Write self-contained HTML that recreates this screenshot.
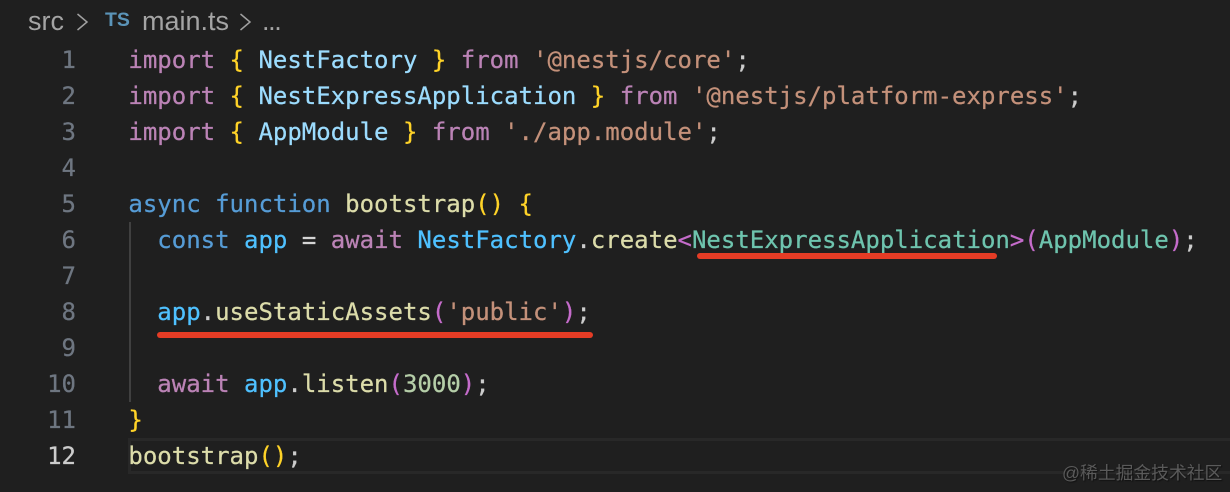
<!DOCTYPE html>
<html><head><meta charset="utf-8">
<style>
html,body{margin:0;padding:0;background:#1f1f1f;}
#r{position:relative;width:1230px;height:492px;overflow:hidden;background:#1f1f1f;}
.l,.n{position:absolute;font-family:"DejaVu Sans Mono","Liberation Mono",monospace;font-size:24px;line-height:36px;white-space:pre;height:36px;-webkit-text-stroke:0.25px currentColor;filter:blur(0.3px);}
.l{left:128.4px;color:#cccccc;}
.n{left:0;width:76px;text-align:right;color:#6e7681;}
.k{color:#bb83b6}.b{color:#ffd328}.v{color:#9cdcfe}.s{color:#c4917a}.d{color:#569cd6}.f{color:#dcdcaa}
.c{color:#4fc1ff}.t{color:#6ec4ae}.p{color:#c56ccb}.w{color:#cccccc}.g{color:#b5cea8}.a{color:#d4d4d4}
.crumb{position:absolute;font-family:"Liberation Sans",sans-serif;font-size:27px;line-height:30px;color:#a4a4a4;white-space:pre;top:6px;filter:blur(0.3px);}
</style></head><body><div id="r">
<div class="crumb" style="left:28px">src</div>
<div class="crumb" style="left:105px;top:5px;font-size:19.5px;font-weight:bold;color:#5b94b8">TS</div>
<div class="crumb" style="left:142px">main.ts</div>
<div class="crumb" style="left:262px;letter-spacing:-1.4px">...</div>
<svg style="position:absolute;left:0;top:0" width="300" height="40" viewBox="0 0 300 40"><path d="M77.5 14 L87 22 L77.5 30 M240.5 14 L250 22 L240.5 30" fill="none" stroke="#a0a0a0" stroke-width="1.5"/></svg>

<div style="position:absolute;left:129px;top:222px;width:2px;height:180px;background:#404040"></div>
<div style="position:absolute;left:128px;top:438px;width:1102px;height:36px;box-sizing:border-box;border-top:3px solid #282828;border-bottom:3px solid #282828;border-left:3px solid #282828"></div>

<div class="n" style="top:42px">1</div>
<div class="n" style="top:78px">2</div>
<div class="n" style="top:114px">3</div>
<div class="n" style="top:150px">4</div>
<div class="n" style="top:186px">5</div>
<div class="n" style="top:222px">6</div>
<div class="n" style="top:258px">7</div>
<div class="n" style="top:294px">8</div>
<div class="n" style="top:330px">9</div>
<div class="n" style="top:366px">10</div>
<div class="n" style="top:402px">11</div>
<div class="n" style="top:438px;color:#cccccc">12</div>

<div class="l" style="top:42px"><span class="k">import</span> <span class="b">{</span> <span class="v">NestFactory</span> <span class="b">}</span> <span class="k">from</span> <span class="s">'@nestjs/core'</span>;</div>
<div class="l" style="top:78px"><span class="k">import</span> <span class="b">{</span> <span class="v">NestExpressApplication</span> <span class="b">}</span> <span class="k">from</span> <span class="s">'@nestjs/platform-express'</span>;</div>
<div class="l" style="top:114px"><span class="k">import</span> <span class="b">{</span> <span class="v">AppModule</span> <span class="b">}</span> <span class="k">from</span> <span class="s">'./app.module'</span>;</div>
<div class="l" style="top:186px"><span class="d">async</span> <span class="d">function</span> <span class="f">bootstrap</span><span class="b">()</span> <span class="b">{</span></div>
<div class="l" style="top:222px">  <span class="d">const</span> <span class="c">app</span> <span class="a">=</span> <span class="k">await</span> <span class="c">NestFactory</span>.<span class="f">create</span><span class="p">&lt;</span><span class="t">NestExpressApplication</span><span class="p">&gt;(</span><span class="t">AppModule</span><span class="p">)</span>;</div>
<div class="l" style="top:294px">  <span class="c">app</span>.<span class="f">useStaticAssets</span><span class="p">(</span><span class="s">'public'</span><span class="p">)</span>;</div>
<div class="l" style="top:366px">  <span class="k">await</span> <span class="c">app</span>.<span class="f">listen</span><span class="p">(</span><span class="g">3000</span><span class="p">)</span>;</div>
<div class="l" style="top:402px"><span class="b">}</span></div>
<div class="l" style="top:438px"><span class="f">bootstrap</span><span class="b">()</span>;</div>

<div style="position:absolute;left:697px;top:253px;width:300px;height:6px;border-radius:3px;background:#e53c25"></div>
<div style="position:absolute;left:157px;top:332px;width:436px;height:6px;border-radius:3px;background:#e53c25"></div>

<div style="position:absolute;left:1062px;top:462px;font-family:'Liberation Sans','Noto Sans CJK SC',sans-serif;font-size:17.8px;line-height:22px;color:#5a5a5a;white-space:pre;text-shadow:1px 1px 1px #111">@稀土掘金技术社区</div>
</div></body></html>
